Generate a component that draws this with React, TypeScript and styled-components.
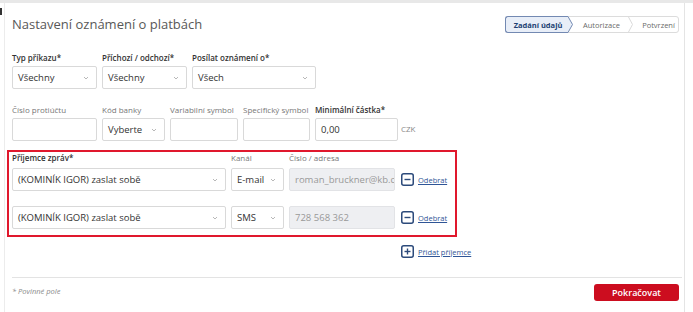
import styled, { createGlobalStyle } from "styled-components";

const GlobalStyle = createGlobalStyle`
  * { box-sizing: border-box; }
  body {
    margin: 0;
    background: #ffffff;
    font-family: "Open Sans", "DejaVu Sans", sans-serif;
    color: #333;
  }
`;

const Page = styled.div`
  display: flex;
  width: 693px;
  height: 312px;
  overflow: hidden;
  border-top: 3px solid #e8e8e8;
`;

const Gutter = styled.div`
  width: 4px;
  padding-top: 5px;
`;

const Caret = styled.div`
  width: 2px;
  height: 7px;
  background: #333;
`;

const Card = styled.div`
  width: 681px;
  background: #fff;
  border-left: 1px solid #ececec;
  border-right: 1px solid #e4e4e4;
  padding: 13px 5px 0 7px;
`;

const Header = styled.div`
  display: flex;
  justify-content: space-between;
  align-items: center;
  height: 17px;
`;

const Title = styled.h1`
  margin: 0;
  font-size: 13px;
  line-height: 17px;
  font-weight: 400;
  color: #585858;
`;

const Stepper = styled.div`
  display: flex;
  height: 17px;
  border: 1px solid #dcdcdc;
  border-radius: 3px;
`;

const Step = styled.div<{ $active?: boolean; $width: number; $pad?: number }>`
  display: flex;
  align-items: center;
  justify-content: center;
  flex: none;
  width: ${(p) => p.$width}px;
  padding-left: ${(p) => p.$pad ?? 0}px;
  font-size: 7.5px;
  white-space: nowrap;
  font-weight: ${(p) => (p.$active ? 700 : 400)};
  color: ${(p) => (p.$active ? "#203f72" : "#6a6a6a")};
  ${(p) =>
    p.$active
      ? `margin: -1px 0 -1px -1px;
         height: 17px;
         background: #e8eef8;
         border: 1px solid #7389b2;
         border-right: none;
         border-radius: 3px 0 0 3px;`
      : ""}
`;

const Tip = styled.svg<{ $outer?: boolean }>`
  flex: none;
  display: block;
  margin: ${(p) => (p.$outer ? "-1px 0" : "0")};
`;

const Row = styled.div<{ $top: number }>`
  display: flex;
  align-items: flex-end;
  gap: 5px;
  margin-top: ${(p) => p.$top}px;
`;

const Field = styled.div<{ $width: number }>`
  display: flex;
  flex-direction: column;
  gap: 2px;
  width: ${(p) => p.$width}px;
  flex: none;
`;

const Label = styled.div<{ $bold?: boolean }>`
  font-size: 8px;
  line-height: 12px;
  white-space: nowrap;
  font-weight: ${(p) => (p.$bold ? 600 : 400)};
  color: ${(p) => (p.$bold ? "#333" : "#777")};
`;

const Box = styled.div<{ $disabled?: boolean }>`
  display: flex;
  align-items: center;
  justify-content: space-between;
  height: 23px;
  padding: 0 7px 0 5px;
  border: 1px solid ${(p) => (p.$disabled ? "#e2e3e6" : "#d9d9d9")};
  border-radius: 2px;
  background: ${(p) => (p.$disabled ? "#eeeff2" : "#fff")};
  font-size: 9.5px;
  color: ${(p) => (p.$disabled ? "#999" : "#333")};
  white-space: nowrap;
  overflow: hidden;
`;

const Unit = styled.div`
  font-size: 8px;
  color: #888;
  padding: 0 0 7px 0;
  margin-left: -2px;
`;

const Highlight = styled.div`
  margin: 9px 0 0 -5px;
  width: 450px;
  border: 2px solid #e0182d;
  padding: 0 0 6px 3px;
`;

const RecipientRow = styled.div<{ $top: number }>`
  display: flex;
  align-items: center;
  gap: 5px;
  margin-top: ${(p) => p.$top}px;
`;

const HeadRow = styled.div`
  display: flex;
  gap: 5px;
`;

const LinkAction = styled.a`
  display: flex;
  align-items: center;
  gap: 4px;
  margin-left: 1px;
  font-size: 7.5px;
  color: #2f5596;
  text-decoration: underline;
  cursor: pointer;
`;

const AddRow = styled.div`
  display: flex;
  padding-left: 388px;
  margin-top: 8px;
  height: 13px;
`;

const Divider = styled.hr`
  margin: 19px 0 0 0;
  border: none;
  border-top: 1px solid #e3e3e3;
  width: 670px;
`;

const Footer = styled.div`
  display: flex;
  justify-content: space-between;
  align-items: center;
  margin-top: 6px;
`;

const Note = styled.div`
  font-size: 7.5px;
  font-style: italic;
  color: #8a8a8a;
  padding-bottom: 4px;
`;

const Button = styled.button`
  width: 85px;
  height: 17px;
  border: none;
  border-radius: 3px;
  background: #cc0d1f;
  color: #fff;
  font-family: inherit;
  font-size: 9px;
  font-weight: 600;
  padding: 0;
`;

const Chevron = () => (
  <svg width="6" height="4" viewBox="0 0 6 4">
    <path d="M1 1 L3 3 L5 1" fill="none" stroke="#b0b0b0" strokeWidth="0.9" />
  </svg>
);

const SquareIcon = ({ plus }: { plus?: boolean }) => (
  <svg width="13" height="13" viewBox="0 0 13 13">
    <rect x="0.75" y="0.75" width="11.5" height="11.5" rx="2" fill="none" stroke="#2c4a7b" strokeWidth="1.5" />
    <path d="M3.5 6.5 H9.5" stroke="#2c4a7b" strokeWidth="1.4" />
    {plus && <path d="M6.5 3.5 V9.5" stroke="#2c4a7b" strokeWidth="1.4" />}
  </svg>
);

const Select = ({ value }: { value: string }) => (
  <Box>
    <span>{value}</span>
    <Chevron />
  </Box>
);

const recipients = [
  { channel: "E-mail", address: "roman_bruckner@kb.cz" },
  { channel: "SMS", address: "728 568 362" },
];

function App() {
  return (
    <>
      <GlobalStyle />
      <Page>
        <Gutter>
          <Caret />
        </Gutter>
        <Card>
          <Header>
            <Title>Nastavení oznámení o platbách</Title>
            <Stepper>
              <Step $active $width={63} $pad={2}>
                Zadání údajů
              </Step>
              <Tip $outer width="5" height="17" viewBox="0 0 5 17">
                <polygon points="0,0.5 4.5,8.5 0,16.5" fill="#e8eef8" />
                <polyline points="0,0.5 4.5,8.5 0,16.5" fill="none" stroke="#7389b2" strokeWidth="1" />
              </Tip>
              <Step $width={55} $pad={2}>
                Autorizace
              </Step>
              <Tip width="5" height="15" viewBox="0 0 5 15">
                <polyline points="0.5,0 4.5,7.5 0.5,15" fill="none" stroke="#dadada" strokeWidth="1" />
              </Tip>
              <Step $width={45} $pad={6}>
                Potvrzení
              </Step>
            </Stepper>
          </Header>

          <Row $top={19}>
            <Field $width={85}>
              <Label $bold>Typ příkazu*</Label>
              <Select value="Všechny" />
            </Field>
            <Field $width={85}>
              <Label $bold>Příchozí / odchozí*</Label>
              <Select value="Všechny" />
            </Field>
            <Field $width={124}>
              <Label $bold>Posílat oznámení o*</Label>
              <Select value="Všech" />
            </Field>
          </Row>

          <Row $top={15}>
            <Field $width={85}>
              <Label>Číslo protiúčtu</Label>
              <Box />
            </Field>
            <Field $width={63}>
              <Label>Kód banky</Label>
              <Select value="Vyberte" />
            </Field>
            <Field $width={68}>
              <Label>Variabilní symbol</Label>
              <Box />
            </Field>
            <Field $width={67}>
              <Label>Specifický symbol</Label>
              <Box />
            </Field>
            <Field $width={83}>
              <Label $bold>Minimální částka*</Label>
              <Box>0,00</Box>
            </Field>
            <Unit>CZK</Unit>
          </Row>

          <Highlight>
            <HeadRow>
              <Field $width={214}>
                <Label $bold>Příjemce zpráv*</Label>
              </Field>
              <Field $width={53}>
                <Label>Kanál</Label>
              </Field>
              <Field $width={106}>
                <Label>Číslo / adresa</Label>
              </Field>
            </HeadRow>
            {recipients.map((r, i) => (
              <RecipientRow key={r.channel} $top={i === 0 ? 4 : 15}>
                <Field $width={214}>
                  <Select value="(KOMINÍK IGOR) zaslat sobě" />
                </Field>
                <Field $width={53}>
                  <Select value={r.channel} />
                </Field>
                <Field $width={106}>
                  <Box $disabled>{r.address}</Box>
                </Field>
                <LinkAction>
                  <SquareIcon />
                  Odebrat
                </LinkAction>
              </RecipientRow>
            ))}
          </Highlight>

          <AddRow>
            <LinkAction>
              <SquareIcon plus />
              Přidat příjemce
            </LinkAction>
          </AddRow>

          <Divider />

          <Footer>
            <Note>* Povinné pole</Note>
            <Button>Pokračovat</Button>
          </Footer>
        </Card>
      </Page>
    </>
  );
}

export default App;
